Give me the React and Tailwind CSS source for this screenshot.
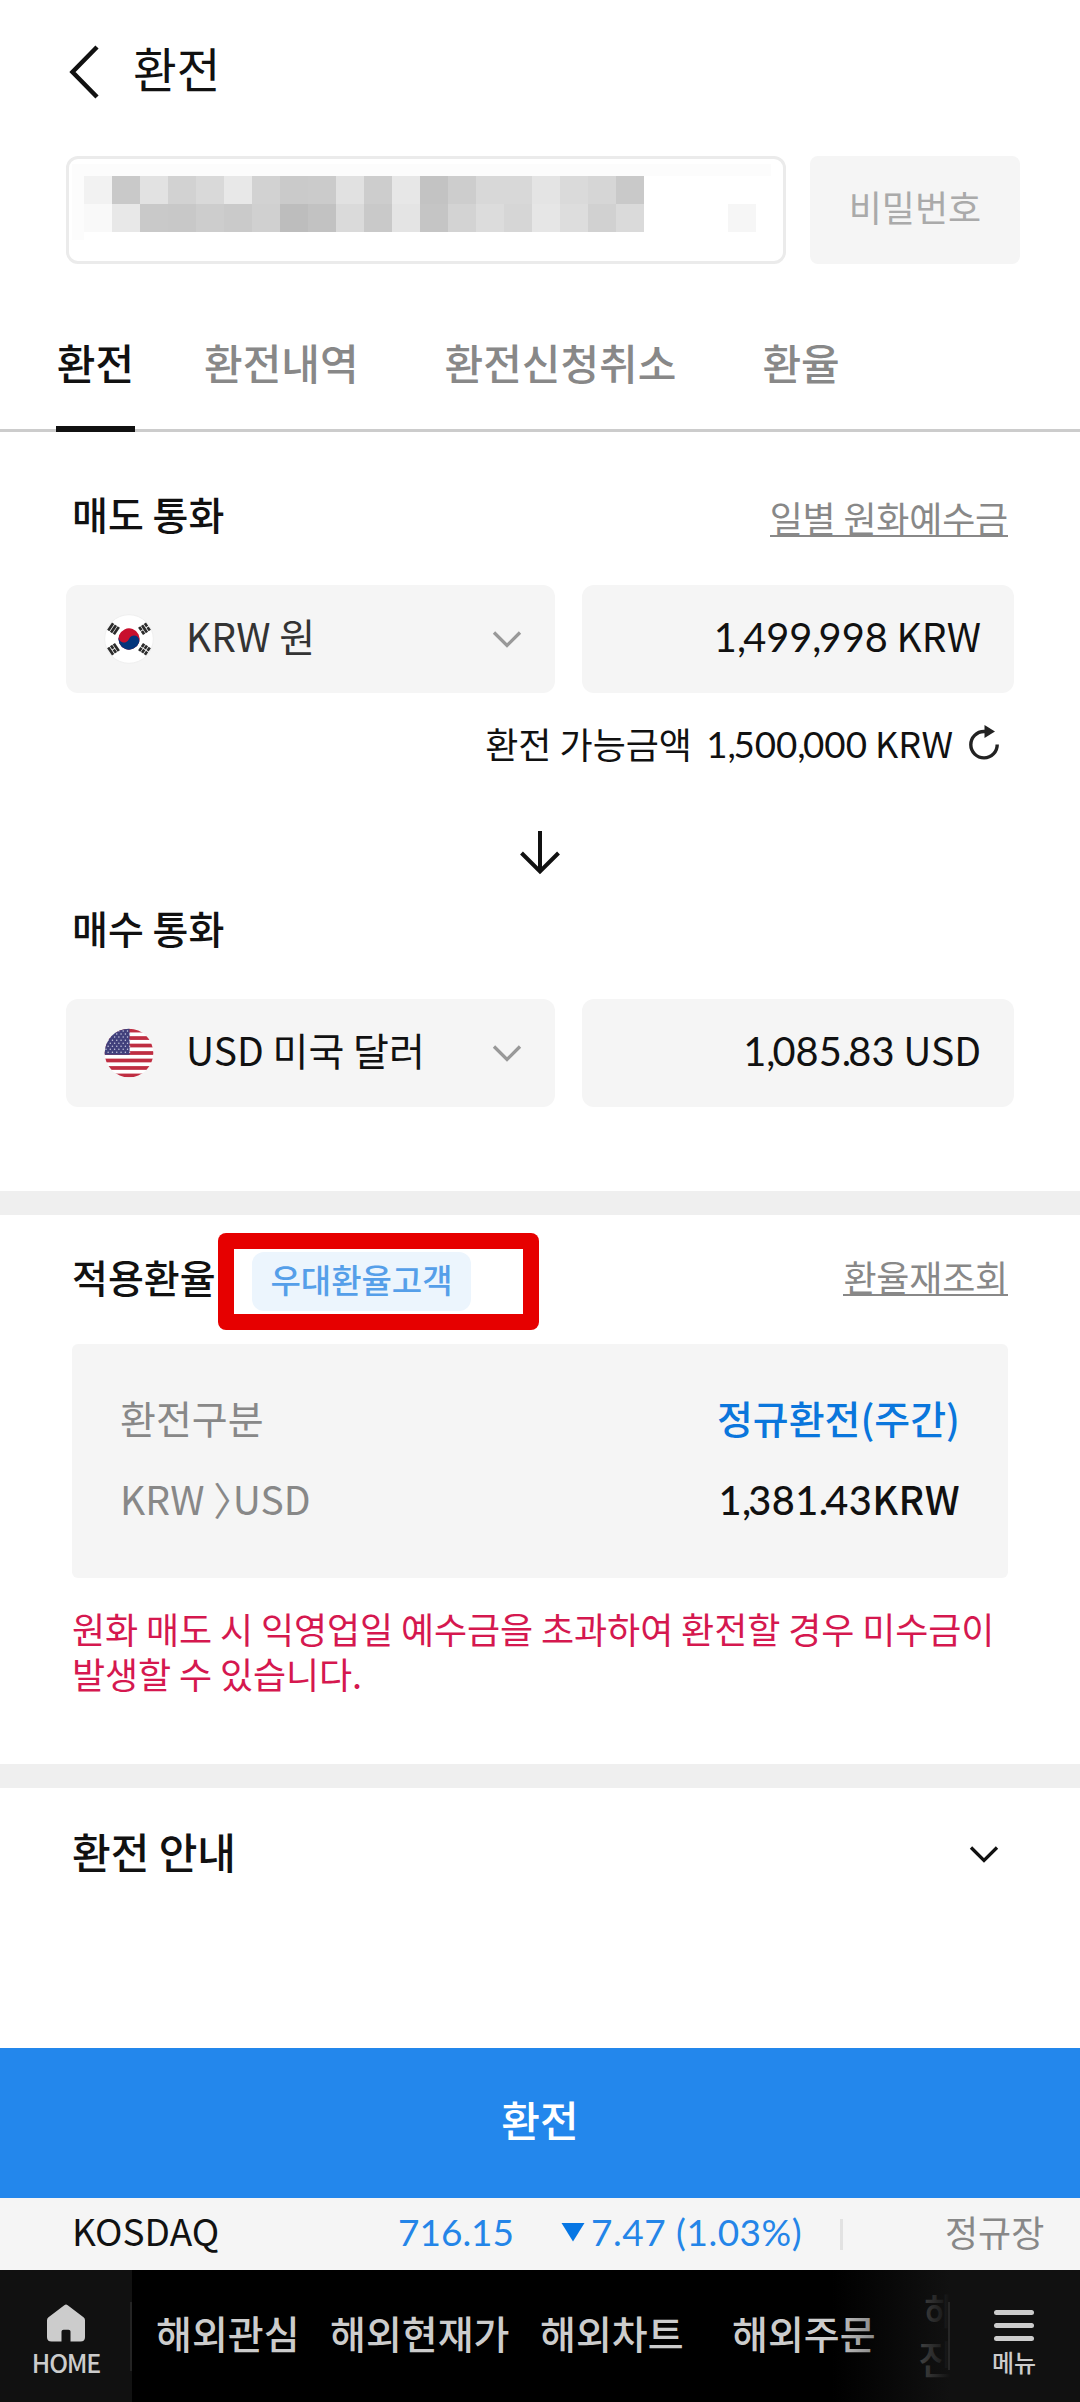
import React from "react";

const MOSAIC = [
  ["#f2f2f2", "#c9c9c9", "#e2e2e2", "#d2d2d2", "#d9d9d9", "#e8e8e8", "#d2d2d2", "#cacaca", "#cbcbcb", "#e1e1e1", "#cdcdcd", "#e7e7e7", "#c3c3c3", "#cdcdcd", "#d8d8d8", "#d8d8d8", "#e4e4e4", "#dadada", "#d6d6d6", "#c9c9c9"],
  ["#f9f9f9", "#e8e8e8", "#c9c9c9", "#c8c8c8", "#cdcdcd", "#cacaca", "#d0d0d0", "#bdbdbd", "#c2c2c2", "#dadada", "#c9c9c9", "#e4e4e4", "#c5c5c5", "#d3d3d3", "#dcdcdc", "#d6d6d6", "#e6e6e6", "#dddddd", "#d1d1d1", "#dadada", "#ffffff", "#ffffff", "#ffffff", "#f6f6f6"],
];

function ChevronDown({ color }) {
  return (
    <svg width="32" height="20" viewBox="0 0 32 20" fill="none" className="shrink-0">
      <path d="M3 3.5 L16 16.5 L29 3.5" stroke={color} strokeWidth="3.3" />
    </svg>
  );
}

function Trigram({ transform, broken }) {
  return (
    <g transform={transform} fill="#2c2c2c">
      {[-3.4, 0, 3.4].map((y, i) =>
        broken[i] ? (
          <g key={y}>
            <rect x="-4.400" y={y - 1.35} width="4" height="2.700" />
            <rect x="0.4" y={y - 1.35} width="4" height="2.700" />
          </g>
        ) : (
          <rect key={y} x="-4.400" y={y - 1.35} width="8.800" height="2.700" />
        )
      )}
    </g>
  );
}

function KoreaFlag() {
  return (
    <svg width="50" height="50" viewBox="-25 -25 50 50" className="shrink-0">
      <circle r="24.3" fill="#fff" stroke="#efefef" strokeWidth="1" />
      <g transform="rotate(20)">
        <circle r="10.6" fill="#c8102e" />
        <path d="M-10.6 0 A10.6 10.6 0 0 0 10.6 0 A5.3 5.3 0 0 0 0 0 A5.3 5.3 0 0 1 -10.6 0Z" fill="#04347c" />
      </g>
      <Trigram transform="translate(-15.5 -10.2) rotate(-56)" broken={[false, false, false]} />
      <Trigram transform="translate(15.5 -10.2) rotate(56)" broken={[true, false, true]} />
      <Trigram transform="translate(-15.5 10.2) rotate(56)" broken={[false, true, false]} />
      <Trigram transform="translate(15.5 10.2) rotate(-56)" broken={[true, true, true]} />
    </svg>
  );
}

function UsaFlag() {
  const stars = [];
  for (let r = 0; r < 8; r++) {
    for (let c = 0; c < 6; c++) {
      stars.push(<circle key={`${r}-${c}`} cx={-23 + c * 4.3 + (r % 2) * 2.15} cy={-22 + r * 3.05} r="0.75" fill="#c9cae0" />);
    }
  }
  return (
    <svg width="50" height="50" viewBox="-25 -25 50 50" className="shrink-0">
      <defs>
        <clipPath id="usa">
          <circle r="24.3" />
        </clipPath>
      </defs>
      <g clipPath="url(#usa)">
        <rect x="-25" y="-25" width="50" height="50" fill="#fff" />
        {[0, 1, 2, 3, 4, 5, 6].map((i) => (
          <rect key={i} x="-25" y={-24.3 + i * 7.48} width="50" height="3.74" fill="#bf2e42" />
        ))}
        <rect x="-25" y="-25" width="25.6" height="26.8" fill="#41407c" />
        <g>{stars}</g>
      </g>
    </svg>
  );
}

// Digits are set in Lato with tight separators, the currency code in the body font.
function Amount({ value, unit, className = "" }) {
  return (
    <span className={className}>
      <span className="font-['Lato',sans-serif] text-[1.02em]">
        {value.split(/([.,])/).map((part, i) =>
          part === "." || part === "," ? (
            <span key={i} className="tracking-[-0.07em]">
              {part}
            </span>
          ) : (
            part
          )
        )}
      </span>
      {unit}
    </span>
  );
}

function CurrencyRow({ flag, name, nameClass, value, unit }) {
  return (
    <div className="flex h-[108px] gap-[27px] px-[66px]">
      <div className="flex w-[489px] items-center rounded-[12px] bg-[#f5f5f5] pl-[38px] pr-[32px]">
        {flag}
        <span className={`ml-[32px] flex-1 pb-[8px] text-[39px] leading-none ${nameClass}`}>{name}</span>
        <ChevronDown color="#999" />
      </div>
      <div className="flex w-[432px] items-center justify-end rounded-[12px] bg-[#f5f5f5] pb-[6px] pr-[33px] text-[39px] leading-none">
        <Amount value={value} unit={unit} />
      </div>
    </div>
  );
}

export default function App() {
  return (
    <div className="flex h-[2402px] w-[1080px] flex-col overflow-hidden whitespace-nowrap bg-white font-['Noto_Sans_CJK_KR',sans-serif] text-[#111]">
      <header className="flex h-[134px] shrink-0 items-center pl-[66px]">
        <svg width="36" height="60" viewBox="0 0 36 60" fill="none" className="mt-[10px]">
          <path d="M31 5 L6.500 30 L31 55" stroke="#111" strokeWidth="4.500" />
        </svg>
        <h1 className="ml-[31px] pt-[2px] text-[47.500px] leading-none">환전</h1>
      </header>

      <div className="mt-[22px] flex h-[108px] shrink-0 gap-[24px] pl-[66px]">
        <div className="w-[720px] rounded-[12px] border-[3px] border-[#ebebeb] pl-[3px] pt-[5px]">
          <div className="h-[76px] w-[699px] border-l-[12px] border-t-[12px] border-[#fcfcfc]">
            {MOSAIC.map((row, i) => (
              <div key={i} className="flex">
                {row.map((c, j) => (
                  <div key={j} className="h-[28px] w-[28px]" style={{ backgroundColor: c }} />
                ))}
              </div>
            ))}
          </div>
        </div>
        <div className="flex w-[210px] items-center justify-center rounded-[8px] bg-[#f5f5f5] pb-[8px] text-[36px] leading-none text-[#aaa]">
          비밀번호
        </div>
      </div>

      <nav className="mt-[34px] flex h-[134px] shrink-0 border-b-[3px] border-[#ccc] pl-[56px] text-[42px] font-medium leading-none text-[#888]">
        <div className="-mb-[3px] flex w-[79px] items-center justify-center border-b-[6px] border-[#111] text-[#111]">환전</div>
        <div className="ml-[69px] flex items-center pb-[3px]">환전내역</div>
        <div className="ml-[86px] flex items-center pb-[3px]">환전신청취소</div>
        <div className="ml-[86px] flex items-center pb-[3px]">환율</div>
      </nav>

      <section className="shrink-0">
        <div className="flex h-[153px] items-center justify-between px-[72px] pt-[10px]">
          <h2 className="text-[39px] font-medium leading-none">매도 통화</h2>
          <span className="mt-[8px] border-b-2 border-[#888] text-[36px] leading-none tracking-[-0.2px] text-[#888]">일별 원화예수금</span>
        </div>
        <CurrencyRow flag={<KoreaFlag />} name="KRW 원" nameClass="text-[#333]" value="1,499,998" unit=" KRW" />
        <div className="flex h-[100px] items-center justify-end pr-[79px] text-[36px] leading-none">
          <span>환전 가능금액</span>
          <span className="flex w-[261px] justify-end whitespace-pre">
            <Amount value="1,500,000" unit=" KRW" />
          </span>
          <svg width="34" height="38" viewBox="0 0 34 38" fill="none" className="ml-[14px]">
            <path d="M19 7.500 H17 A13.200 13.200 0 1 0 30.200 20.500" stroke="#222" strokeWidth="3.400" />
            <path d="M17.500 1 L28 7.500 L17.500 14Z" fill="#222" />
          </svg>
        </div>
      </section>

      <section className="shrink-0">
        <div className="flex h-[101px] items-center justify-center pt-[17px]">
          <svg width="44" height="48" viewBox="0 0 44 48" fill="none">
            <path d="M22 3 V44 M3.500 25 L22 43.500 L40.500 25" stroke="#111" strokeWidth="4" />
          </svg>
        </div>
        <h2 className="mb-[38px] flex h-[67px] items-center px-[72px] text-[39px] font-medium leading-none">매수 통화</h2>
        <CurrencyRow flag={<UsaFlag />} name="USD 미국 달러" nameClass="text-[#111]" value="1,085.83" unit=" USD" />
      </section>

      <div className="mt-[84px] h-[24px] shrink-0 bg-[#efefef]" />

      <section className="shrink-0 px-[72px]">
        <div className="relative mb-[6px] flex h-[123px] items-center justify-between">
          <h2 className="text-[39px] font-medium leading-none">적용환율</h2>
          <div className="absolute left-[146px] top-[18px] h-[97px] w-[321px] rounded-[8px] bg-[#e60000] p-[16px]">
            <div className="flex h-full items-center bg-white pl-[18px]">
              <span className="flex h-[59px] w-[219px] items-center justify-center rounded-[12px] bg-[#ecf5fd] pb-[4px] text-[33px] font-medium leading-none text-[#559fe9]">
                우대환율고객
              </span>
            </div>
          </div>
          <span className="border-b-2 border-[#888] text-[36px] leading-none tracking-[-0.2px] text-[#888]">환율재조회</span>
        </div>

        <div className="h-[234px] rounded-[6px] bg-[#f5f5f5] px-[48px] pt-[33px] text-[39px] leading-none">
          <div className="flex h-[81px] items-center justify-between">
            <span className="text-[#888]">환전구분</span>
            <span className="font-medium text-[#0a76dc]">정규환전(주간)</span>
          </div>
          <div className="flex h-[81px] items-center justify-between">
            <span className="text-[#888]">
              KRW <span className="[font-feature-settings:'halt']">〉</span>USD
            </span>
            <Amount value="1,381.43" unit="KRW" className="pt-[2px] font-medium tracking-[0.4px]" />
          </div>
        </div>

        <p className="mt-[28px] text-[36px] leading-[45px] tracking-[-0.1px] text-[#d5184f]">
          원화 매도 시 익영업일 예수금을 초과하여 환전할 경우 미수금이
          <br />
          발생할 수 있습니다.
        </p>
      </section>

      <div className="mt-[68px] h-[24px] shrink-0 bg-[#efefef]" />

      <section className="flex h-[126px] shrink-0 items-center justify-between pl-[72px] pr-[80px]">
        <h2 className="text-[42px] font-medium leading-none">환전 안내</h2>
        <div className="pt-[6px]">
          <ChevronDown color="#111" />
        </div>
      </section>

      <button className="mt-[134px] flex h-[150px] shrink-0 items-center justify-center bg-[#2387ec] pb-[8px] text-[42px] font-medium leading-none text-white">
        환전
      </button>

      <div className="flex h-[72px] shrink-0 items-center bg-[#f5f5f5] pb-[7px] pl-[72px] text-[37px] leading-none">
        <span className="w-[326px]">KOSDAQ</span>
        <span className="w-[163px] pt-[2px] font-['Lato',sans-serif] text-[#2485e8]">716.15</span>
        <svg width="24" height="20" viewBox="0 0 24 20" className="mt-[3px]">
          <path d="M0.500 1 H23.500 L12 19.500Z" fill="#0676e4" />
        </svg>
        <span className="ml-[6px] w-[249px] pt-[2px] font-['Lato',sans-serif] tracking-[0.5px] text-[#2485e8]">7.47 (1.03%)</span>
        <span className="mt-[7px] h-[31px] w-[3px] bg-[#e2e2e2]" />
        <span className="ml-[102px] text-[36px] text-[#888]">정규장</span>
      </div>

      <footer className="flex h-[132px] shrink-0 bg-black font-medium leading-none text-[#ccc]">
        <div className="flex w-[132px] items-center bg-[#111]">
          <div className="flex w-[130px] flex-col items-center pl-[2px] pt-[6px]">
            <svg width="38" height="38" viewBox="0 0 38 40" preserveAspectRatio="none">
              <path d="M17.300 1.200 Q19 0 20.700 1.200 L36.500 14 Q38 15.300 38 17 V35 Q38 39.500 33.500 39.500 H23.500 V29 Q23.500 27 21.500 27 H16.500 Q14.500 27 14.500 29 V39.500 H4.500 Q0 39.500 0 35 V17 Q0 15.300 1.500 14Z" fill="#ccc" />
            </svg>
            <span className="mt-[8px] text-[25px] tracking-[-1.2px]">HOME</span>
          </div>
          <div className="h-[69px] w-[2px] bg-[#242424]" />
        </div>
        <div className="relative flex w-[818px] items-center overflow-hidden pb-[7px] pl-[24px] text-[39px]">
          <span className="w-[174px] shrink-0">해외관심</span>
          <span className="w-[210px] shrink-0">해외현재가</span>
          <span className="w-[192px] shrink-0">해외차트</span>
          <span className="w-[186px] shrink-0">해외주문</span>
          <span className="flex shrink-0 flex-col leading-[48px]">
            <span className="pl-[6px]">해</span>
            <span>진</span>
          </span>
          <div className="absolute inset-y-0 right-0 w-[118px] bg-gradient-to-r from-transparent to-[#111]" />
          <div className="absolute right-0 top-[32px] h-[68px] w-[2px] bg-[#262626]" />
        </div>
        <div className="flex w-[130px] flex-col items-center bg-[#111] pr-[2px] pt-[40px]">
          <div className="flex w-[40px] flex-col gap-[8px]">
            <div className="h-[5px] rounded-full bg-[#ccc]" />
            <div className="h-[5px] rounded-full bg-[#ccc]" />
            <div className="h-[5px] rounded-full bg-[#ccc]" />
          </div>
          <span className="mt-[9px] text-[24px]">메뉴</span>
        </div>
      </footer>
    </div>
  );
}
